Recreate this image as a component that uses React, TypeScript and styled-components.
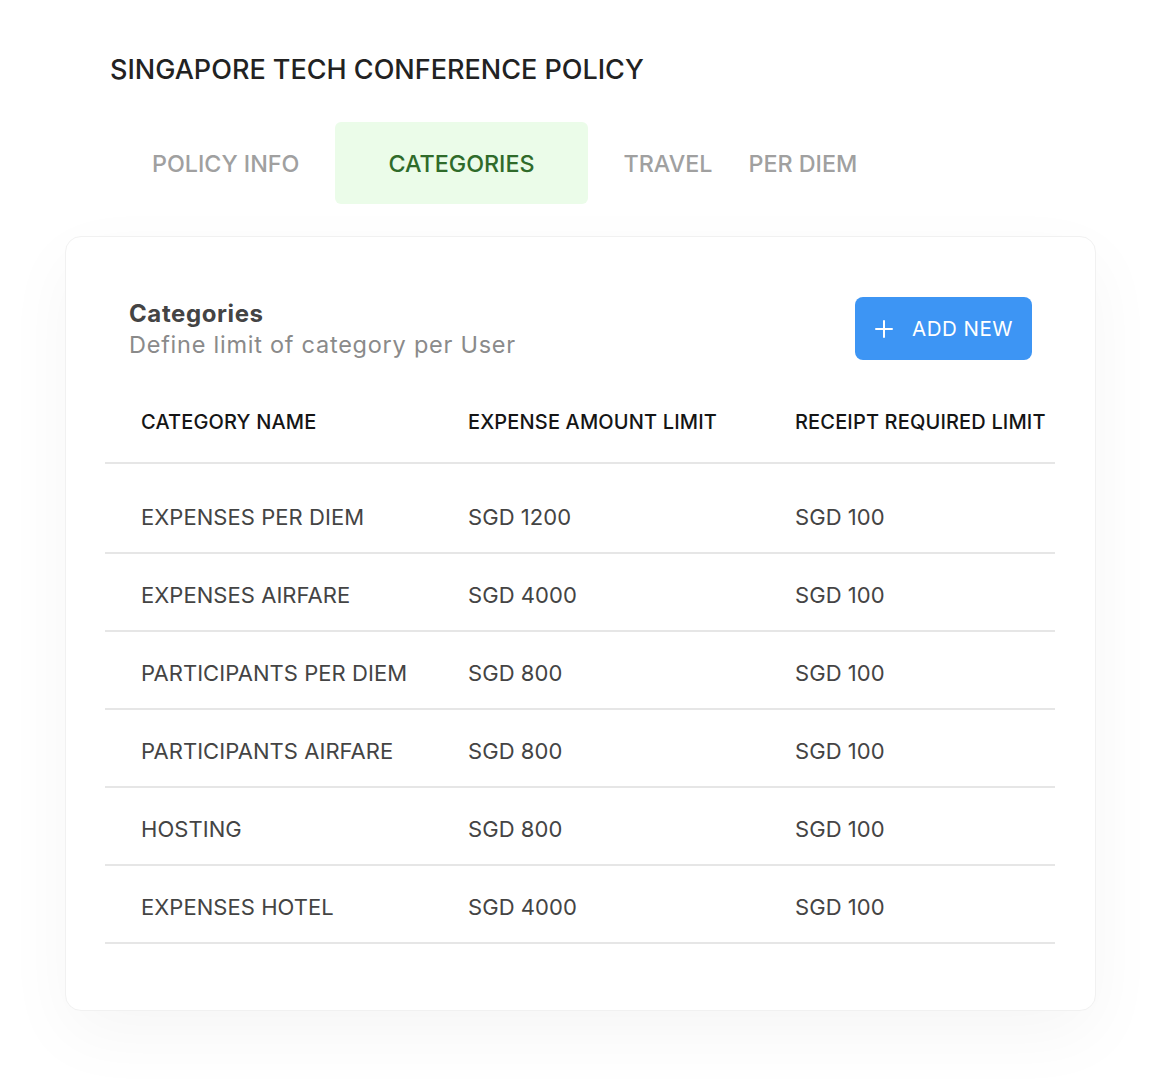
import React, { FC } from 'react'
import styled, { createGlobalStyle } from 'styled-components'

const GlobalStyle = createGlobalStyle({
  'html, body': {
    margin: 0,
    padding: 0,
    background: '#ffffff',
  },
  body: {
    fontFamily: 'Inter, "Noto Sans", "Liberation Sans", sans-serif',
    color: '#222',
  },
})

const Page = styled.div({
  width: '1164px',
  minHeight: '1080px',
  boxSizing: 'border-box',
  padding: '52px 0 0 0',
})

const Title = styled.h1({
  margin: '0 0 0 110px',
  fontSize: '27px',
  fontWeight: 500,
  letterSpacing: '0px',
  color: '#222',
  lineHeight: '36px',
})

const Tabs = styled.div({
  display: 'flex',
  alignItems: 'stretch',
  gap: '36px',
  margin: '34px 0 0 152px',
  height: '82px',
})

const Tab = styled.div<{ active?: boolean }>(({ active }) => ({
  display: 'flex',
  alignItems: 'center',
  padding: active ? '0 53px' : '0',
  borderRadius: '6px',
  background: active ? '#ebfce9' : 'transparent',
  color: active ? '#2f6b2a' : '#a0a0a0',
  fontSize: '23.3px',
  fontWeight: 500,
}))

const Card = styled.section({
  margin: '32px 0 0 65px',
  width: '1031px',
  boxSizing: 'border-box',
  padding: '60px 40px 66px 39px',
  border: '1px solid #f1f1f1',
  borderRadius: '16px',
  background: '#fff',
  boxShadow: '0 24px 70px rgba(0, 0, 0, 0.04)',
})

const CardHeader = styled.div({
  display: 'flex',
  justifyContent: 'space-between',
  alignItems: 'flex-start',
  padding: '0 23px 0 24px',
})

const HeaderText = styled.div({
  display: 'flex',
  flexDirection: 'column',
  paddingTop: '3px',
})

const CardTitle = styled.h2({
  margin: 0,
  fontSize: '24px',
  fontWeight: 700,
  letterSpacing: '0.6px',
  color: '#444',
  lineHeight: '28px',
})

const CardSubtitle = styled.p({
  margin: 0,
  fontSize: '23.5px',
  fontWeight: 400,
  letterSpacing: '0.75px',
  color: '#8a8a8a',
  lineHeight: '34px',
})

const AddButton = styled.button({
  display: 'flex',
  alignItems: 'center',
  gap: '19px',
  height: '63px',
  width: '177px',
  padding: '0 0 0 20px',
  boxSizing: 'border-box',
  border: 'none',
  borderRadius: '8px',
  background: '#3d95f4',
  color: '#fff',
  fontFamily: 'inherit',
  fontSize: '20.5px',
  fontWeight: 400,
  letterSpacing: '0.5px',
  whiteSpace: 'nowrap',
  cursor: 'pointer',
})

const Table = styled.div({
  marginTop: '20px',
  display: 'flex',
  flexDirection: 'column',
})

const HeadRow = styled.div({
  display: 'grid',
  gridTemplateColumns: '327px 327px 1fr',
  alignItems: 'center',
  height: '80px',
  borderBottom: '2px solid #e6e6e6',
  marginBottom: '12px',
})

const HeadCell = styled.div({
  paddingLeft: '36px',
  fontSize: '20px',
  fontWeight: 500,
  letterSpacing: '0.15px',
  color: '#151515',
  whiteSpace: 'nowrap',
})

const Row = styled.div({
  display: 'grid',
  gridTemplateColumns: '327px 327px 1fr',
  alignItems: 'center',
  height: '78px',
  paddingTop: '6px',
  borderBottom: '2px solid #e6e6e6',
  boxSizing: 'border-box',
})

const Cell = styled.div({
  paddingLeft: '36px',
  fontSize: '22px',
  fontWeight: 400,
  letterSpacing: '0.05px',
  color: '#444',
  whiteSpace: 'nowrap',
})

const PlusIcon: FC = () => (
  <svg width="18" height="18" viewBox="0 0 18 18" fill="none">
    <path d="M9 1v16M1 9h16" stroke="#fff" strokeWidth="2" strokeLinecap="round" />
  </svg>
)

const rows = [
  { name: 'EXPENSES PER DIEM', amount: 'SGD 1200', receipt: 'SGD 100' },
  { name: 'EXPENSES AIRFARE', amount: 'SGD 4000', receipt: 'SGD 100' },
  { name: 'PARTICIPANTS PER DIEM', amount: 'SGD 800', receipt: 'SGD 100' },
  { name: 'PARTICIPANTS AIRFARE', amount: 'SGD 800', receipt: 'SGD 100' },
  { name: 'HOSTING', amount: 'SGD 800', receipt: 'SGD 100' },
  { name: 'EXPENSES HOTEL', amount: 'SGD 4000', receipt: 'SGD 100' },
]

const App: FC = () => (
  <Page>
    <GlobalStyle />
    <Title>SINGAPORE TECH CONFERENCE POLICY</Title>

    <Tabs>
      <Tab>POLICY INFO</Tab>
      <Tab active>CATEGORIES</Tab>
      <Tab>TRAVEL</Tab>
      <Tab>PER DIEM</Tab>
    </Tabs>

    <Card>
      <CardHeader>
        <HeaderText>
          <CardTitle>Categories</CardTitle>
          <CardSubtitle>Define limit of category per User</CardSubtitle>
        </HeaderText>
        <AddButton>
          <PlusIcon />
          ADD NEW
        </AddButton>
      </CardHeader>

      <Table>
        <HeadRow>
          <HeadCell>CATEGORY NAME</HeadCell>
          <HeadCell>EXPENSE AMOUNT LIMIT</HeadCell>
          <HeadCell>RECEIPT REQUIRED LIMIT</HeadCell>
        </HeadRow>
        {rows.map((r) => (
          <Row key={r.name}>
            <Cell>{r.name}</Cell>
            <Cell>{r.amount}</Cell>
            <Cell>{r.receipt}</Cell>
          </Row>
        ))}
      </Table>
    </Card>
  </Page>
)

export default App
